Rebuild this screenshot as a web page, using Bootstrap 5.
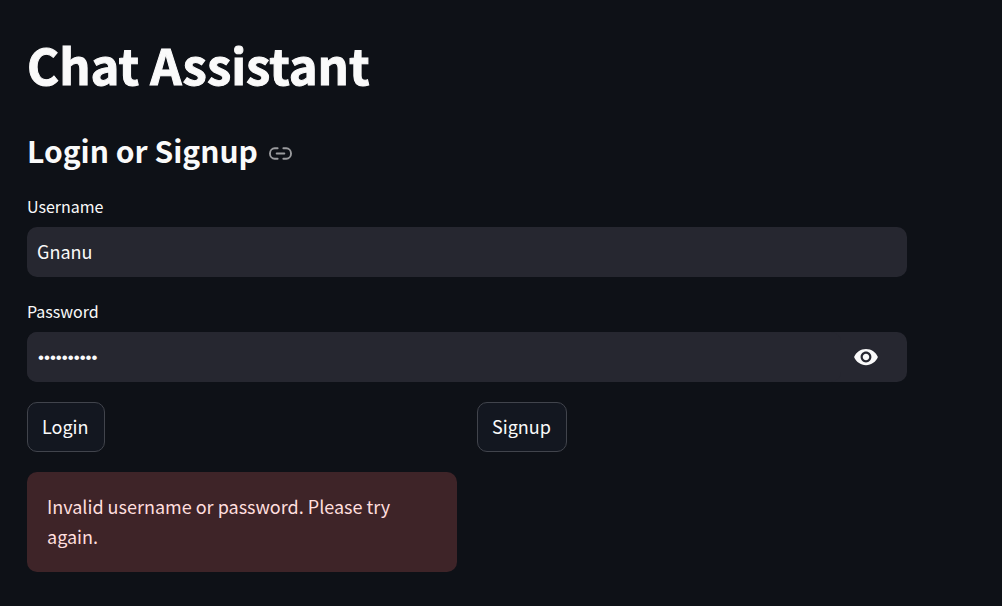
<!DOCTYPE html>
<html lang="en">
<head>
<meta charset="utf-8">
<meta name="viewport" content="width=device-width, initial-scale=1">
<title>Chat Assistant</title>
<link href="https://cdn.jsdelivr.net/npm/bootstrap@5.3.0/dist/css/bootstrap.min.css" rel="stylesheet">
<style>
  body { background: #0e1117; color: #fafafa; font-family: "Noto Sans CJK SC", sans-serif; font-size: 18px; line-height: 30px; }
  .page { max-width: 934px; padding: 32px 27px; }
  .page-title { font-size: 49px; line-height: 64px; font-weight: 700; margin-bottom: 34px; -webkit-text-stroke: 1px currentColor; }
  .page-subtitle { font-size: 30px; line-height: 40px; font-weight: 600; margin: 0; }
  .subtitle-row { gap: 11px; }
  .anchor-link { color: #9a9b9e; line-height: 0; margin-top: 6px; }
  .login-form { margin-top: 24px; }
  .form-label { font-size: 16px; line-height: 24px; margin-bottom: 9px; }
  .field, .field:focus { background: #262730; color: #fafafa; border: 0; border-radius: 10px; box-shadow: none; height: 50px; font-size: 18px; padding: 0 10px 2px; }
  .field[type="password"] { font-family: "Liberation Sans", sans-serif; font-size: 17px; padding: 2px 11px 0; }
  .field-group { background: #262730; border-radius: 10px; }
  .password-row { margin-top: 22px; }
  .eye-btn { color: #fafafa; padding: 0 28px 0 12px; border: 0; line-height: 0; }
  .btn-dark-outline { background: #131720; color: #fafafa; border: 1px solid #41444c; border-radius: 10px; height: 50px; padding: 0 15px 2px 14px; font-size: 18px; }
  .btn-dark-outline:hover { color: #ff4b4b; border-color: #ff4b4b; }
  .action-row { --bs-gutter-x: 20px; margin-top: 20px; }
  .login-alert { background: #3e2428; color: #ffdede; border: 0; border-radius: 10px; padding: 19px 20px 21px; margin: 20px 0 0; }
</style>
</head>
<body>
<main class="page">
  <h1 class="page-title">Chat Assistant</h1>
  <div class="d-flex align-items-center subtitle-row">
    <h2 class="page-subtitle">Login or Signup</h2>
    <a href="#login" class="anchor-link" aria-label="Link to heading">
      <svg width="23" height="23" viewBox="0 0 24 24" fill="none" stroke="currentColor" stroke-width="2" stroke-linecap="round" stroke-linejoin="round"><path d="M15 6.500h3a5 5.500 0 0 1 0 11h-3M9 17.500H6a5 5.500 0 0 1 0-11h3M8 12h8"/></svg>
    </a>
  </div>
  <form id="login" class="login-form">
    <div class="d-flex flex-column">
      <label class="form-label" for="username">Username</label>
      <input class="form-control field" type="text" id="username" value="Gnanu">
    </div>
    <div class="d-flex flex-column password-row">
      <label class="form-label" for="password">Password</label>
      <div class="d-flex align-items-center field-group">
        <input class="form-control field" type="password" id="password" value="password12">
        <button class="btn eye-btn" type="button" aria-label="Show password">
          <svg width="26" height="26" viewBox="0 0 24 24" fill="currentColor"><path d="M12 4.500C7 4.500 2.730 7.610 1 12c1.730 4.390 6 7.500 11 7.500s9.270-3.110 11-7.500c-1.730-4.390-6-7.500-11-7.500zM12 17c-2.760 0-5-2.240-5-5s2.240-5 5-5 5 2.240 5 5-2.240 5-5 5zm0-8c-1.660 0-3 1.340-3 3s1.340 3 3 3 3-1.340 3-3-1.340-3-3-3z"/></svg>
        </button>
      </div>
    </div>
    <div class="row action-row">
      <div class="col-6">
        <button class="btn btn-dark-outline" type="button">Login</button>
        <div class="alert login-alert" role="alert">Invalid username or password. Please try again.</div>
      </div>
      <div class="col-6">
        <button class="btn btn-dark-outline" type="button">Signup</button>
      </div>
    </div>
  </form>
</main>
</body>
</html>
